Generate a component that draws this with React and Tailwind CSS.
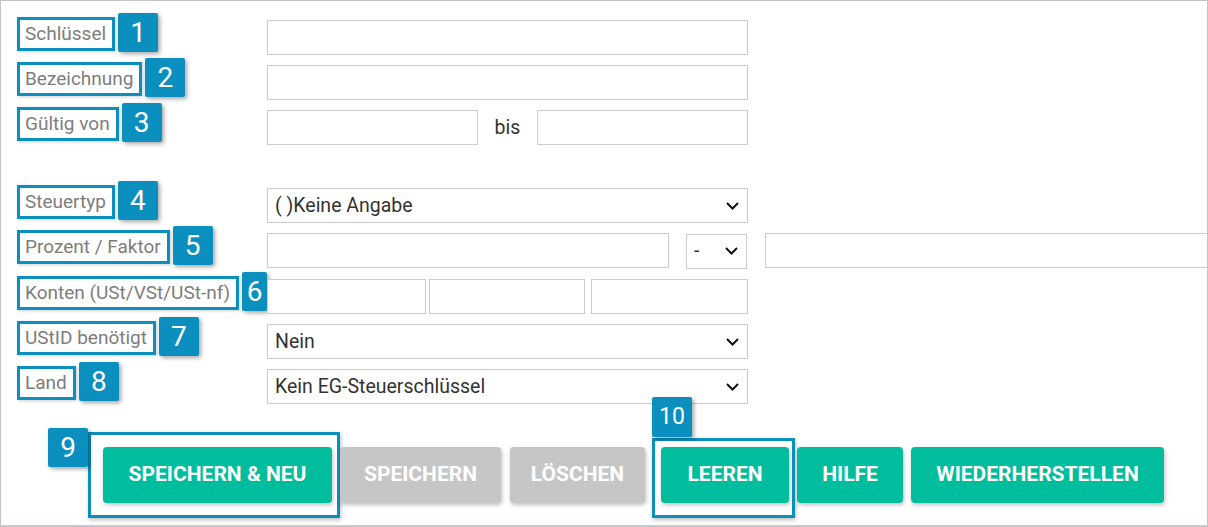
import React from 'react';

const FONT = "font-['Roboto','Liberation_Sans',sans-serif]";

const Badge = ({ n, className = '' }) => (
    <div className={`w-[40px] h-[39px] bg-[#0a8fbf] text-white text-[28px] leading-none flex items-center justify-center rounded-[2px] shadow-[2px_2px_4px_rgba(0,0,0,0.35)] ${className}`}>
        {n}
    </div>
);

const Label = ({ text, n }) => (
    <div className="flex items-start pl-[16px]">
        <div className="-mt-[3px] h-[34px] border-[3px] border-[#0a8fbf] pl-[5px] pr-[6px] pb-[2px] flex items-center text-[19px] text-[#7d7d7d] leading-none shadow-[1px_1px_3px_rgba(0,0,0,0.2)] whitespace-nowrap">
            {text}
        </div>
        <Badge n={n} className="-mt-[7px] ml-[3px]" />
    </div>
);

const Input = ({ className = '' }) => (
    <div className={`h-[35px] border border-[#cccccc] bg-white ${className}`} />
);

const Chevron = () => (
    <svg width="13" height="8" viewBox="0 0 13 8" className="shrink-0">
        <polyline points="1,1 6.5,6.5 12,1" fill="none" stroke="#111" strokeWidth="2" />
    </svg>
);

const Select = ({ value, className = '' }) => (
    <div className={`h-[35px] border border-[#cccccc] bg-white flex items-center justify-between pl-[7px] pr-[8px] text-[19.5px] text-[#333] ${className}`}>
        <span className="leading-none">{value}</span>
        <Chevron />
    </div>
);

const Row = ({ label, n, mb = 'mb-[10px]', children }) => (
    <div className={`flex items-start h-[35px] ${mb}`}>
        <div className="w-[266px] shrink-0">
            <Label text={label} n={n} />
        </div>
        <div className="flex items-center h-[35px]">{children}</div>
    </div>
);

const Button = ({ label, width, gray, className = '', children }) => (
    <div className={`relative shrink-0 ${className}`}>
        <div
            className={`h-[56px] ${width} rounded-[4px] flex items-center justify-center text-white text-[21px] font-bold uppercase shadow-[1px_2px_4px_rgba(0,0,0,0.25)] ${gray ? 'bg-[#c6c6c6]' : 'bg-[#00bd9d]'}`}
        >
            {label}
        </div>
        {children}
    </div>
);

export default function App() {
    return (
        <div className={`w-[1208px] h-[527px] bg-white border border-[#c4c4c4] border-b-2 border-b-[#c6c9cf] overflow-hidden ${FONT}`}>
            <div className="pt-[19px]">
                <Row label="Schlüssel" n="1">
                    <Input className="w-[481px]" />
                </Row>
                <Row label="Bezeichnung" n="2">
                    <Input className="w-[481px]" />
                </Row>
                <Row label="Gültig von" n="3" mb="mb-[43px]">
                    <Input className="w-[211px]" />
                    <div className="w-[59px] text-center text-[19.5px] text-[#333]">bis</div>
                    <Input className="w-[211px]" />
                </Row>
                <Row label="Steuertyp" n="4">
                    <Select value="( )Keine Angabe" className="w-[481px]" />
                </Row>
                <Row label="Prozent / Faktor" n="5" mb="mb-[11px]">
                    <Input className="w-[402px]" />
                    <Select value="-" className="w-[61px] ml-[17px] mt-[1px] pr-[7px]" />
                    <Input className="w-[480px] ml-[18px]" />
                </Row>
                <Row label="Konten (USt/VSt/USt-nf)" n="6">
                    <Input className="w-[159px]" />
                    <Input className="w-[156px] ml-[3px]" />
                    <Input className="w-[157px] ml-[6px]" />
                </Row>
                <Row label="UStID benötigt" n="7">
                    <Select value="Nein" className="w-[481px]" />
                </Row>
                <Row label="Land" n="8" mb="mb-[43px]">
                    <Select value="Kein EG-Steuerschlüssel" className="w-[481px]" />
                </Row>

                <div className="flex items-start pl-[102px]">
                    <Button label="Speichern & Neu" width="w-[229px]">
                        <div className="absolute -left-[15px] -top-[15px] -right-[8px] -bottom-[15px] border-[3px] border-[#0a8fbf] shadow-[1px_2px_4px_rgba(0,0,0,0.25)] pointer-events-none" />
                        <Badge n="9" className="absolute -left-[55px] -top-[19px]" />
                    </Button>
                    <Button label="Speichern" width="w-[161px]" gray className="ml-[8px]" />
                    <Button label="Löschen" width="w-[135px]" gray className="ml-[9px]" />
                    <Button label="Leeren" width="w-[128px]" className="ml-[16px]">
                        <div className="absolute -left-[9px] -top-[9px] -right-[6px] -bottom-[15px] border-[3px] border-[#0a8fbf] shadow-[1px_2px_4px_rgba(0,0,0,0.25)] pointer-events-none" />
                        <div className="absolute -left-[9px] -top-[50px] w-[40px] h-[40px] bg-[#0a8fbf] text-white text-[23px] flex items-center justify-center rounded-[2px] shadow-[2px_2px_4px_rgba(0,0,0,0.35)]">
                            10
                        </div>
                    </Button>
                    <Button label="Hilfe" width="w-[106px]" className="ml-[8px]" />
                    <Button label="Wiederherstellen" width="w-[253px]" className="ml-[8px]" />
                </div>
            </div>
        </div>
    );
}
